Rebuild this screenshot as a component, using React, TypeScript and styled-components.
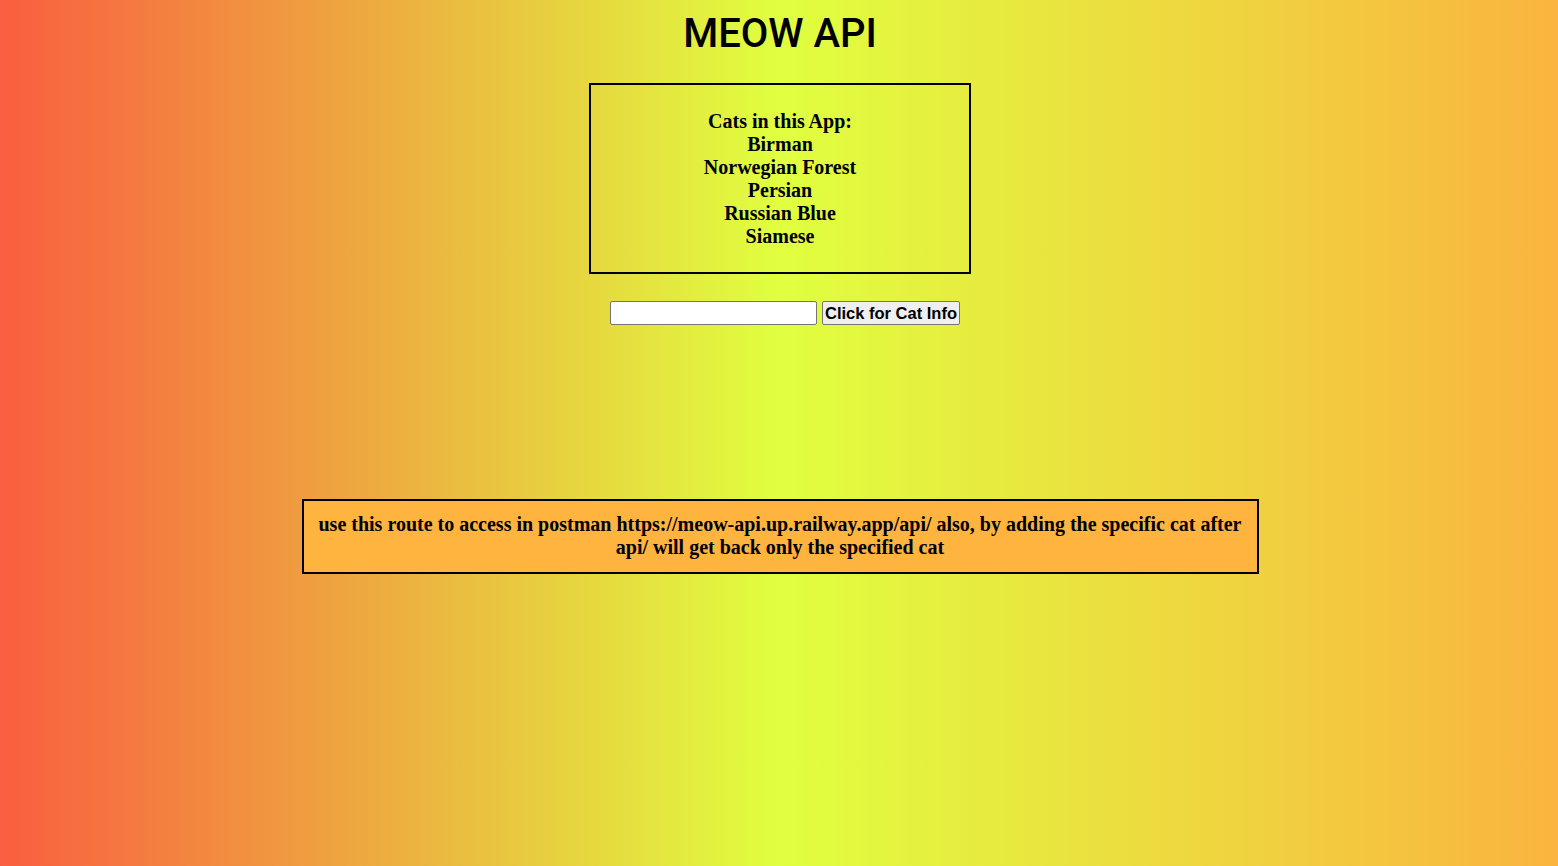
import React from "react";
import styled, { createGlobalStyle } from "styled-components";

const GlobalStyle = createGlobalStyle`
  html, body {
    margin: 0;
    padding: 0;
    min-height: 100%;
  }
  body {
    min-height: 866px;
    background: linear-gradient(to right, #f95e40 0%, #e0ff3f 50%, #fab43f 100%);
    background-attachment: fixed;
    font-family: "Liberation Serif", "Times New Roman", serif;
    color: #000;
  }
`;

const Page = styled.main`
  display: flex;
  flex-direction: column;
  align-items: center;
  padding-top: 11px;
  padding-left: 2px;
  min-height: 866px;
  box-sizing: border-box;
`;

const Title = styled.h1`
  margin: 0;
  font-family: Roboto, "Liberation Sans", Arial, sans-serif;
  font-weight: 500;
  font-size: 40px;
  line-height: 45px;
  color: #000;
`;

const CatBox = styled.section`
  margin-top: 27px;
  width: 382px;
  box-sizing: border-box;
  border: 2px solid #000;
  padding: 25px 10px 24px;
  display: flex;
  flex-direction: column;
  align-items: center;
`;

const Line = styled.div`
  font-family: "Liberation Serif", "Times New Roman", serif;
  font-weight: 700;
  font-size: 20px;
  line-height: 23px;
  text-align: center;
`;

const Form = styled.form`
  margin-top: 27px;
  margin-left: 10px;
  display: flex;
  align-items: center;
  gap: 5px;
  height: 24px;
`;

const Input = styled.input`
  width: 207px;
  height: 24px;
  box-sizing: border-box;
  background: #fff;
  border: 1px solid #767676;
  border-radius: 2px;
  padding: 1px 2px;
  font-size: 13px;
  font-family: "Liberation Sans", Arial, sans-serif;
`;

const Button = styled.button`
  height: 24px;
  box-sizing: border-box;
  background: #efefef;
  border: 1px solid #767676;
  border-radius: 2px;
  padding: 0 2px;
  font-family: "Liberation Sans", Arial, sans-serif;
  font-weight: 700;
  font-size: 16.5px;
  line-height: 20px;
  color: #000;
  cursor: pointer;
`;

const RouteBox = styled.section`
  margin-top: 174px;
  width: 957px;
  box-sizing: border-box;
  border: 2px solid #000;
  background: #ffb440;
  padding: 12px 14px 13px;
  font-family: "Liberation Serif", "Times New Roman", serif;
  font-weight: 700;
  font-size: 20px;
  line-height: 23px;
  text-align: center;
`;

const cats = ["Birman", "Norwegian Forest", "Persian", "Russian Blue", "Siamese"];

export default function App() {
  return (
    <>
      <GlobalStyle />
      <Page>
        <Title>MEOW API</Title>
        <CatBox>
          <Line>Cats in this App:</Line>
          {cats.map((c) => (
            <Line key={c}>{c}</Line>
          ))}
        </CatBox>
        <Form onSubmit={(e) => e.preventDefault()}>
          <Input type="text" />
          <Button type="submit">Click for Cat Info</Button>
        </Form>
        <RouteBox>
          use this route to access in postman https://meow-api.up.railway.app/api/ also, by adding the specific cat after api/ will get back only the specified cat
        </RouteBox>
      </Page>
    </>
  );
}
